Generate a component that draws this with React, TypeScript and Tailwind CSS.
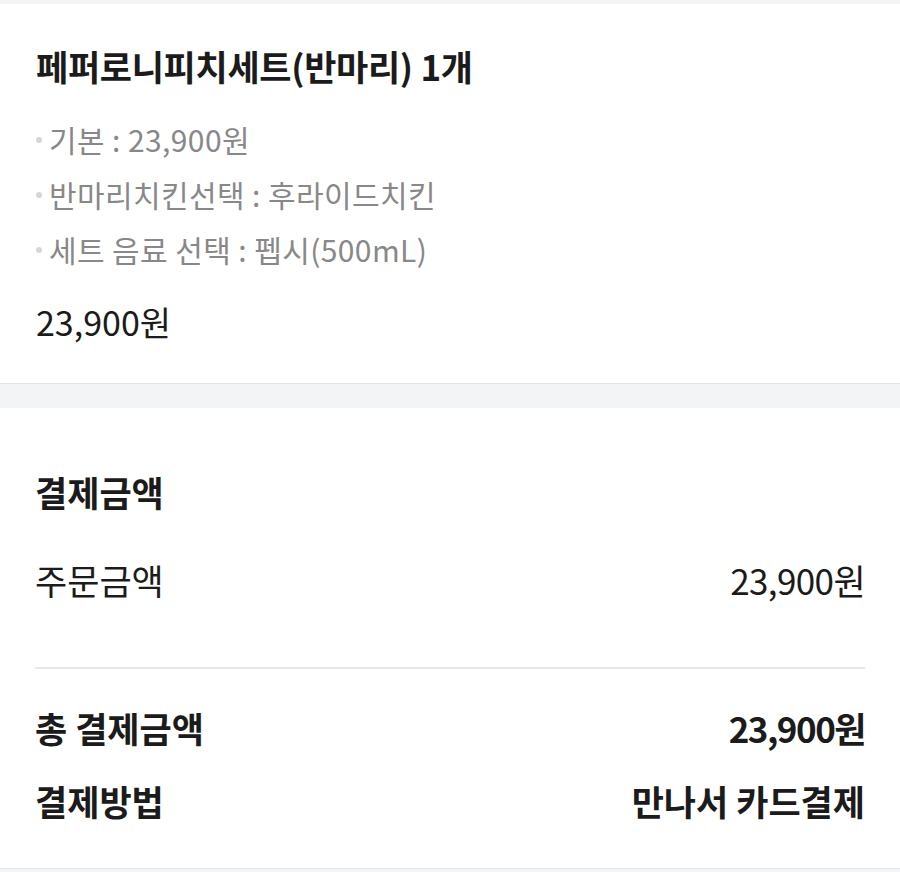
import React from 'react';

const options = [
  '기본 : 23,900원',
  '반마리치킨선택 : 후라이드치킨',
  '세트 음료 선택 : 펩시(500mL)',
];

export default function App() {
  return (
    <div
      className="min-h-[872px] w-[900px] bg-[#f3f4f6] pt-[4px] text-[#1b1b1b]"
      style={{ fontFamily: '"Noto Sans CJK KR", "Noto Sans", sans-serif' }}
    >
      <section className="border-b border-[#e3e4e6] bg-white px-[36px] pb-[39px] pt-[40px]">
        <h2 className="text-[35px] font-bold leading-[44px] tracking-[-0.3px]">
          페퍼로니피치세트(반마리) 1개
        </h2>
        <ul className="mt-[24px]">
          {options.map((opt) => (
            <li key={opt} className="flex items-center text-[30px] leading-[55px] tracking-[0.4px] text-[#888888]">
              <span className="mr-[7px] h-[6px] w-[6px] rounded-full bg-[#d6d6d6]" />
              {opt}
            </li>
          ))}
        </ul>
        <p className="mt-[23px] text-[34px] leading-[44px]">23,900원</p>
      </section>

      <section className="mt-[24px] border-b border-[#e3e4e6] bg-white px-[35px] pb-[45px] pt-[62px]">
        <h3 className="text-[35px] font-bold leading-[44px]">결제금액</h3>
        <div className="mt-[44px] flex justify-between text-[35px] leading-[44px]">
          <span>주문금액</span>
          <span className="tracking-[-0.6px]">23,900원</span>
        </div>
        <div className="mt-[65px] h-[2px] bg-[#e8e8e8]" />
        <div className="mt-[37px] flex justify-between text-[35px] font-bold leading-[44px]">
          <span>총 결제금액</span>
          <span className="tracking-[-1.5px]">23,900원</span>
        </div>
        <div className="mt-[29px] flex justify-between text-[35px] font-bold leading-[44px]">
          <span>결제방법</span>
          <span>만나서 카드결제</span>
        </div>
      </section>
    </div>
  );
}
